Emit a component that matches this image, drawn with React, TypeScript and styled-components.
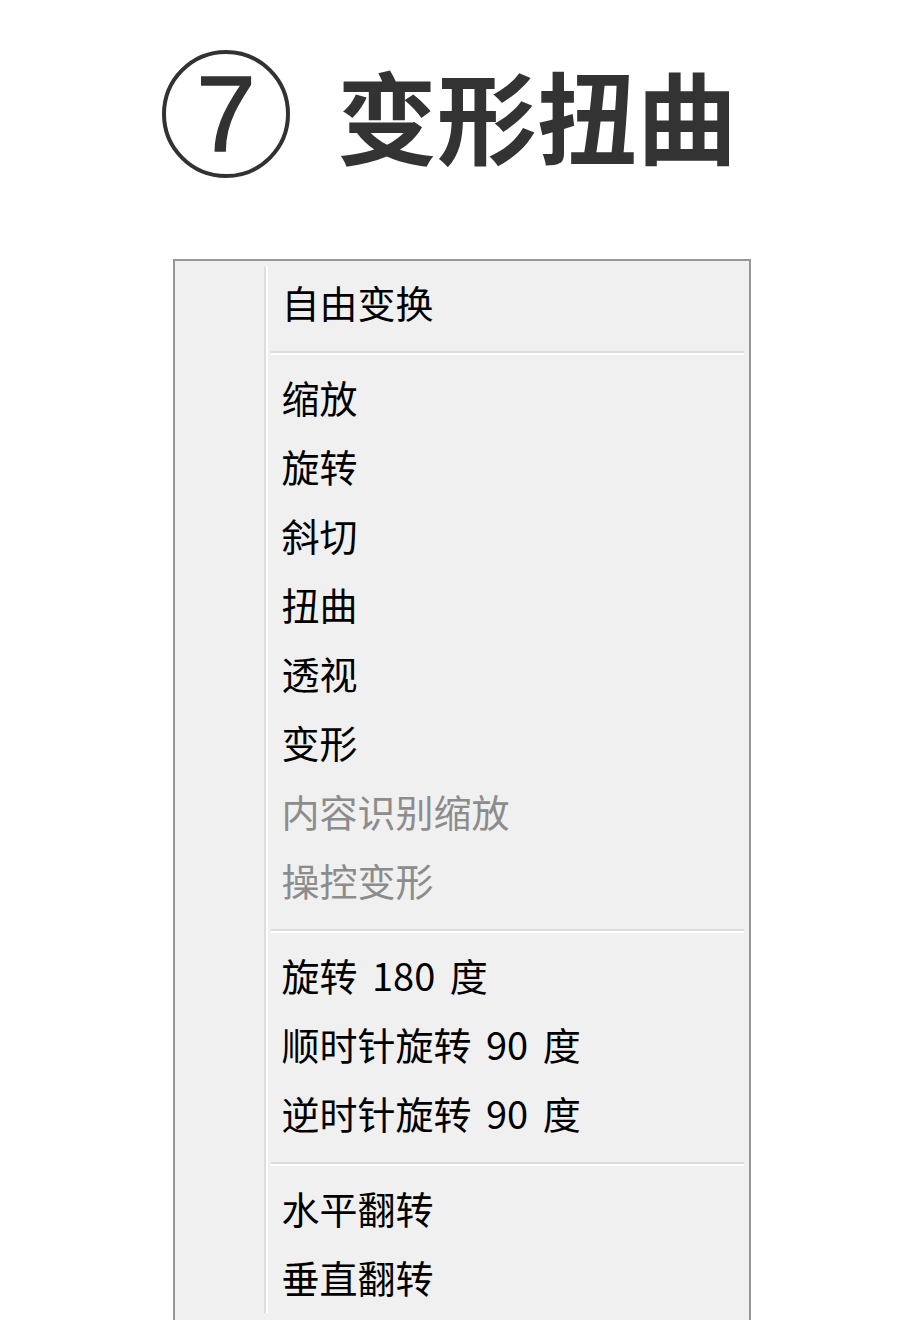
import styled, { createGlobalStyle } from "styled-components";

const GlobalStyle = createGlobalStyle`
	html,
	body {
		background: #ffffff;
		margin: 0;
		overflow: hidden;
	}
`;

const Page = styled.div`
	display: flex;
	flex-direction: column;
	padding-top: 50px;
	width: 923px;
`;

const Header = styled.div`
	align-items: center;
	display: flex;
	gap: 47px;
	justify-content: center;
	padding-right: 24px;
`;

const NumberBadge = styled.div`
	align-items: center;
	border: 4px solid #323232;
	border-radius: 50%;
	box-sizing: border-box;
	color: #323232;
	display: flex;
	font-family: "Liberation Sans", Arial, sans-serif;
	font-size: 107px;
	height: 128px;
	justify-content: center;
	line-height: 1;
	-webkit-text-stroke: 1.5px #323232;
	width: 128px;
`;

const Title = styled.h1`
	color: #333333;
	font-family: "Noto Sans CJK SC", sans-serif;
	font-size: 100px;
	font-weight: 700;
	line-height: 1;
	margin: 0;
`;

const Menu = styled.div`
	background: #f0f0f0;
	border: 2px solid #969696;
	box-sizing: border-box;
	margin: 81px auto 0;
	padding: 6px 0 10px 89px;
	width: 578px;
`;

const ItemList = styled.div`
	border-left: 2px solid #dcdcdc;
	box-shadow: inset 2px 0 0 #ffffff;
	display: flex;
	flex-direction: column;
	padding-bottom: 2px;
`;

const Item = styled.div<{ $disabled?: boolean }>`
	align-items: center;
	color: ${({ $disabled }) => ($disabled ? "#8c8c8c" : "#000000")};
	display: flex;
	font-family: "Noto Sans CJK SC", sans-serif;
	font-size: 38px;
	height: 69px;
	padding-left: 16px;
	white-space: pre;
	word-spacing: 6px;
`;

const Separator = styled.div`
	border-bottom: 2px solid #ffffff;
	border-top: 2px solid #dcdcdc;
	margin: 15px 5px 7px 5px;
`;

interface MenuEntry {
	label: string;
	disabled?: boolean;
}

const groups: MenuEntry[][] = [
	[{ label: "自由变换" }],
	[
		{ label: "缩放" },
		{ label: "旋转" },
		{ label: "斜切" },
		{ label: "扭曲" },
		{ label: "透视" },
		{ label: "变形" },
		{ label: "内容识别缩放", disabled: true },
		{ label: "操控变形", disabled: true },
	],
	[
		{ label: "旋转 180 度" },
		{ label: "顺时针旋转 90 度" },
		{ label: "逆时针旋转 90 度" },
	],
	[{ label: "水平翻转" }, { label: "垂直翻转" }],
];

export default function App() {
	return (
		<>
			<GlobalStyle />
			<Page>
				<Header>
					<NumberBadge>7</NumberBadge>
					<Title>变形扭曲</Title>
				</Header>
				<Menu>
					<ItemList>
						{groups.map((group, i) => (
							<div key={i}>
								{i > 0 && <Separator />}
								{group.map((entry) => (
									<Item key={entry.label} $disabled={entry.disabled}>
										{entry.label}
									</Item>
								))}
							</div>
						))}
					</ItemList>
				</Menu>
			</Page>
		</>
	);
}
